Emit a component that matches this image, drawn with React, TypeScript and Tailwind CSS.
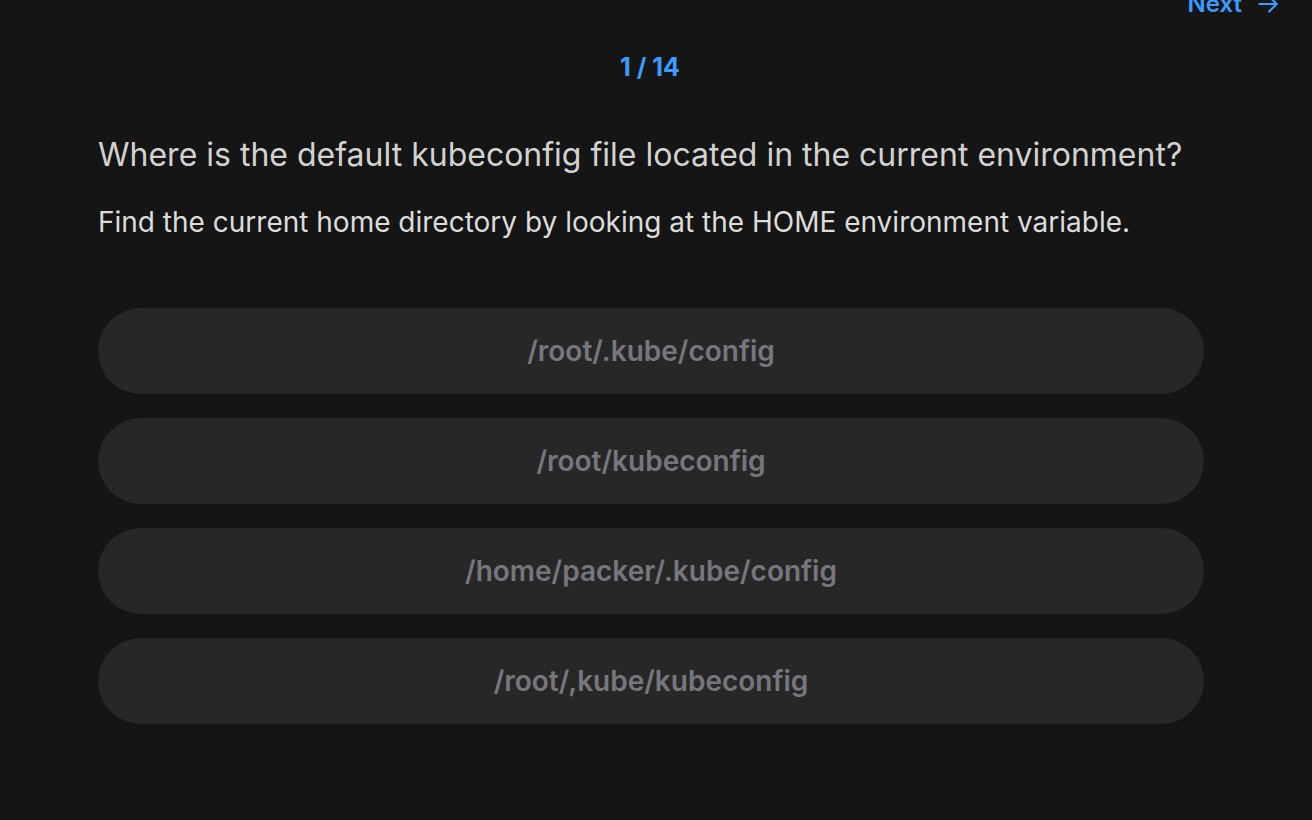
const options = ['/root/.kube/config', '/root/kubeconfig', '/home/packer/.kube/config', '/root/,kube/kubeconfig'];

export default function App() {
  return (
    <div className="h-[820px] w-[1312px] overflow-hidden bg-[#151515] font-['Inter',sans-serif]">
      <div className="flex justify-end pr-[31px] -mt-[12px]">
        <button className="flex items-center gap-[13px] text-[24px] font-semibold leading-[32px] text-[#3b9cff]">
          Next
          <svg width="26" height="26" viewBox="0 0 24 24" fill="none" stroke="currentColor" strokeWidth="2" strokeLinecap="round" strokeLinejoin="round">
            <path d="M4 12h16" />
            <path d="M13 5l7 7-7 7" />
          </svg>
        </button>
      </div>
      <div className="mt-[32px] pr-[12px] text-center text-[25px] font-bold leading-[30px] text-[#3b9cff]">1 / 14</div>
      <div className="ml-[98px] w-[1106px]">
        <h1 className="mt-[53px] text-[32px] leading-[40px] text-[#d2d2d2]">
          Where is the default kubeconfig file located in the current environment?
        </h1>
        <p className="mt-[29px] text-[28px] leading-[36px] text-[#dcdcdc]">
          Find the current home directory by looking at the HOME environment variable.
        </p>
        <div className="mt-[68px] flex flex-col gap-[24px]">
          {options.map((o) => (
            <button
              key={o}
              className="h-[86px] w-full rounded-full bg-[#272727] text-[28px] font-semibold text-[#77767d]"
            >
              {o}
            </button>
          ))}
        </div>
      </div>
    </div>
  );
}
